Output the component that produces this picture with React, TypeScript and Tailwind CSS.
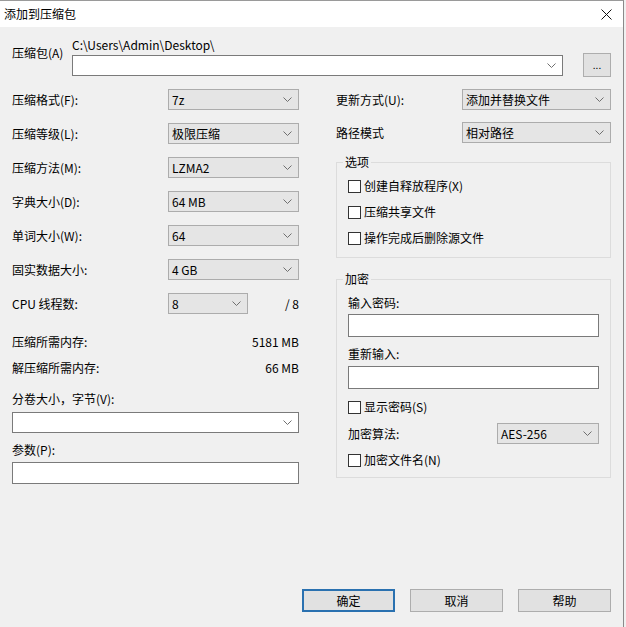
import React from "react";

const Chevron = () => (
  <svg width="9" height="5" viewBox="0 0 9 5" className="shrink-0">
    <polyline points="0.5,0.5 4.5,4.5 8.5,0.5" fill="none" stroke="#6f6f6f" strokeWidth="1" />
  </svg>
);

const Combo = ({ value, w, white }: { value?: string; w?: string; white?: boolean }) => (
  <div
    className={`flex h-[21px] items-center justify-between border pl-[3px] pr-[6px] ${
      white ? "bg-white border-[#7a7a7a]" : "bg-[#e5e5e5] border-[#acacac]"
    } ${w ?? ""}`}
  >
    <span className="leading-[14px]">{value ?? ""}</span>
    <Chevron />
  </div>
);

const Check = ({ label }: { label: string }) => (
  <div className="flex items-center">
    <div className="h-[13px] w-[13px] border border-[#333333] bg-white" />
    <span className="ml-[3px] leading-[14px]">{label}</span>
  </div>
);

const Row = ({ label, value }: { label: string; value: string }) => (
  <div className="flex h-[21px] items-center">
    <span className="w-[156px] leading-[14px]">{label}</span>
    <Combo value={value} w="w-[131px]" />
  </div>
);

export default function App() {
  return (
    <div className="h-[627px] w-[626px] bg-[#f0f0f0] text-[12px] text-black font-['Noto_Sans_CJK_SC',sans-serif]">
      <div className="flex h-full w-[624px] flex-col border-r border-t border-r-[#8a8a8a] border-t-[#9a9a9a]">
        {/* title bar */}
        <div className="flex h-[26px] shrink-0 items-center justify-between bg-white pl-[4px] pr-[11px]">
          <span className="leading-[14px]">添加到压缩包</span>
          <svg width="11" height="11" viewBox="0 0 11 11">
            <path d="M0.5 0.5 L10.5 10.5 M10.5 0.5 L0.5 10.5" stroke="#111" strokeWidth="1" />
          </svg>
        </div>

        <div className="flex flex-1 flex-col pl-[12px] pr-[12px] pt-[11px] pb-[15px]">
          {/* archive */}
          <div className="flex">
            <span className="w-[60px] pt-[8px] leading-[14px]">压缩包(A)</span>
            <div className="flex flex-1 flex-col">
              <span className="h-[14px] leading-[14px]">C:\Users\Admin\Desktop\</span>
              <div className="mt-[1px] flex items-center">
                <div className="flex-1">
                  <Combo white />
                </div>
                <div className="ml-[20px] flex h-[24px] w-[28px] items-center justify-center border border-[#adadad] bg-[#e1e1e1] text-[10px] leading-[10px]">
                  ...
                </div>
              </div>
            </div>
          </div>

          {/* columns */}
          <div className="mt-[12px] flex">
            {/* left */}
            <div className="flex w-[287px] flex-col">
              <div className="flex flex-col gap-[13px]">
                <Row label="压缩格式(F):" value="7z" />
                <Row label="压缩等级(L):" value="极限压缩" />
                <Row label="压缩方法(M):" value="LZMA2" />
                <Row label="字典大小(D):" value="64 MB" />
                <Row label="单词大小(W):" value="64" />
                <Row label="固实数据大小:" value="4 GB" />
                <div className="flex h-[21px] items-center">
                  <span className="w-[156px] leading-[14px]">CPU 线程数:</span>
                  <Combo value="8" w="w-[80px]" />
                  <span className="flex-1 text-right leading-[14px]">/ 8</span>
                </div>
              </div>
              <div className="mt-[15px] flex h-[26px] items-center justify-between">
                <span className="leading-[14px]">压缩所需内存:</span>
                <span className="leading-[14px]">5181 MB</span>
              </div>
              <div className="flex h-[26px] items-center justify-between">
                <span className="leading-[14px]">解压缩所需内存:</span>
                <span className="leading-[14px]">66 MB</span>
              </div>
              <span className="mt-[11px] leading-[14px]">分卷大小，字节(V):</span>
              <div className="mt-[6px]">
                <Combo white />
              </div>
              <span className="mt-[10px] leading-[14px]">参数(P):</span>
              <div className="mt-[5px] h-[22px] border border-[#7a7a7a] bg-white" />
            </div>

            {/* right */}
            <div className="ml-[37px] flex w-[275px] flex-col">
              <div className="flex h-[21px] items-center">
                <span className="w-[126px] leading-[14px]">更新方式(U):</span>
                <Combo value="添加并替换文件" w="w-[149px]" />
              </div>
              <div className="mt-[12px] flex h-[21px] items-center">
                <span className="w-[126px] leading-[14px]">路径模式</span>
                <Combo value="相对路径" w="w-[149px]" />
              </div>

              <fieldset className="mt-[12px] border border-[#dcdcdc] pl-[11px] pr-[11px] pb-[6px]">
                <legend className="-ml-[5px] px-[2px] leading-[14px]">选项</legend>
                <div className="flex flex-col pt-[4px]">
                  <div className="flex h-[26px] items-center">
                    <Check label="创建自释放程序(X)" />
                  </div>
                  <div className="flex h-[26px] items-center">
                    <Check label="压缩共享文件" />
                  </div>
                  <div className="flex h-[26px] items-center">
                    <Check label="操作完成后删除源文件" />
                  </div>
                </div>
              </fieldset>

              <fieldset className="mt-[14px] border border-[#dcdcdc] pl-[11px] pr-[11px] pb-[10px]">
                <legend className="-ml-[5px] px-[2px] leading-[14px]">加密</legend>
                <div className="flex flex-col">
                  <span className="mt-[10px] leading-[14px]">输入密码:</span>
                  <div className="mt-[4px] h-[23px] border border-[#7a7a7a] bg-white" />
                  <span className="mt-[10px] leading-[14px]">重新输入:</span>
                  <div className="mt-[5px] h-[23px] border border-[#7a7a7a] bg-white" />
                  <div className="mt-[11px]">
                    <Check label="显示密码(S)" />
                  </div>
                  <div className="mt-[9px] flex h-[21px] items-center justify-between">
                    <span className="leading-[14px]">加密算法:</span>
                    <Combo value="AES-256" w="w-[102px]" />
                  </div>
                  <div className="mt-[9px]">
                    <Check label="加密文件名(N)" />
                  </div>
                </div>
              </fieldset>
            </div>
          </div>

          {/* buttons */}
          <div className="mt-auto flex justify-end gap-[15px]">
            <div className="flex h-[23px] w-[93px] items-center justify-center border-2 border-[#2a71b0] bg-[#e1e1e1] leading-[14px]">
              确定
            </div>
            <div className="flex h-[23px] w-[93px] items-center justify-center border border-[#adadad] bg-[#e1e1e1] leading-[14px]">
              取消
            </div>
            <div className="flex h-[23px] w-[93px] items-center justify-center border border-[#adadad] bg-[#e1e1e1] leading-[14px]">
              帮助
            </div>
          </div>
        </div>
      </div>
    </div>
  );
}
